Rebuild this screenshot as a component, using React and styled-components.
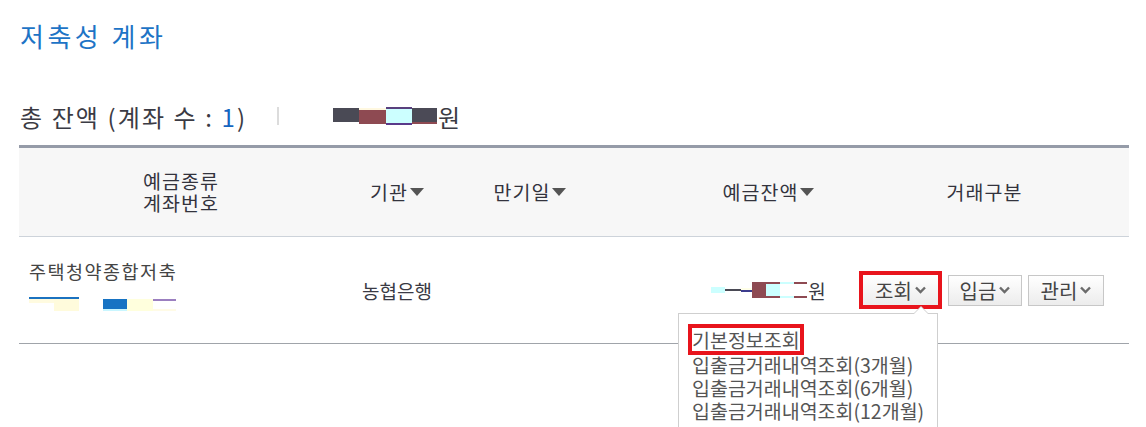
import React from "react";
import styled, { createGlobalStyle } from "styled-components";

const GlobalStyle = createGlobalStyle`
  body {
    margin: 0;
    background: #fff;
    font-family: "Noto Sans CJK KR", "Noto Sans", sans-serif;
    color: #333;
  }
`;

const Page = styled.div`
  width: 1146px;
  height: 427px;
  overflow: hidden;
  padding: 0 17px 0 19px;
  box-sizing: border-box;
`;

const Title = styled.h2`
  margin: 18px 0 0 1px;
  font-size: 26px;
  line-height: 36px;
  font-weight: 400;
  letter-spacing: 3.5px;
  color: #1d74c6;
`;

const Summary = styled.div`
  display: flex;
  align-items: center;
  margin-top: 44px;
  height: 36px;
  font-size: 24px;
  color: #3b3b44;
`;

const SummaryLabel = styled.span`
  letter-spacing: 2.1px;
  padding-left: 1px;
`;

const Count = styled.span`
  color: #1565c0;
`;

const Divider = styled.span`
  width: 2px;
  height: 18px;
  background: #dcdcdc;
  margin: 0 54px 0 30px;
`;

const Won = styled.span`
  margin-left: 1px;
`;

const Mask = styled.span`
  display: inline-flex;
  align-items: ${(p) => p.$align || "center"};
  height: ${(p) => p.$h}px;
`;

const Seg = styled.span`
  display: block;
  width: ${(p) => p.$w}px;
  height: ${(p) => p.$h}px;
  background: ${(p) => p.$bg || "transparent"};
  border-top: ${(p) => (p.$top ? `2px solid ${p.$top}` : "none")};
  border-bottom: ${(p) => (p.$bottom ? `2px solid ${p.$bottom}` : "none")};
  box-sizing: border-box;
  margin-top: ${(p) => p.$mt || 0}px;
`;

const Table = styled.div`
  margin-top: 11px;
  width: 1110px;
  border-top: 3px solid #959ba8;
`;

const Row = styled.div`
  display: grid;
  grid-template-columns: 324px 108px 158px 245px 1fr;
  align-items: center;
`;

const HeadRow = styled(Row)`
  height: 88px;
  background: #f7f7f7;
  border-bottom: 1px solid #cdd3da;
`;

const BodyRow = styled(Row)`
  height: 106px;
  border-bottom: 1px solid #a0a4aa;
`;

const Th = styled.div`
  text-align: center;
  font-size: 19.5px;
  line-height: 22px;
  letter-spacing: 1px;
  color: #33333d;
  padding-left: ${(p) => p.$pl || 0}px;
  padding-right: ${(p) => p.$pr || 0}px;
  display: flex;
  justify-content: center;
  align-items: center;
  flex-direction: column;
`;

const Sort = styled.span`
  display: inline-flex;
  align-items: center;
  gap: 2px;
`;

const Td = styled.div`
  display: flex;
  align-items: center;
  justify-content: ${(p) => p.$justify || "center"};
  padding-left: ${(p) => p.$pl || 0}px;
  font-size: 19px;
  color: #3a3a44;
  position: relative;
`;

const ProductCell = styled.div`
  display: flex;
  flex-direction: column;
  gap: 15px;
  padding-left: 10px;
  margin-top: -10px;
`;

const ProductName = styled.span`
  font-size: 18.5px;
  line-height: 22px;
  letter-spacing: 1.5px;
  color: #444;
`;

const AcctMask = styled.div`
  display: flex;
  gap: 24px;
`;

const Actions = styled.div`
  display: flex;
  align-items: center;
  gap: 6px;
  padding-left: 5px;
`;

const BtnWrap = styled.div`
  position: relative;
`;

const Button = styled.button`
  display: inline-flex;
  align-items: center;
  justify-content: center;
  gap: 3px;
  box-sizing: border-box;
  width: ${(p) => p.$w}px;
  height: ${(p) => (p.$hl ? 38 : 31)}px;
  border: ${(p) => (p.$hl ? "4px solid #e8141c" : "1px solid #c7c7c7")};
  background: linear-gradient(#ffffff, #ececec);
  font-family: "Noto Sans CJK KR", sans-serif;
  font-size: 20px;
  color: #444;
  padding: 0;
  cursor: pointer;
`;

const Menu = styled.div`
  position: absolute;
  left: -181px;
  top: 42px;
  width: 260px;
  height: 140px;
  box-sizing: border-box;
  background: #fff;
  border: 1px solid #cfcfcf;
  padding: 14px 0 0 13px;
  z-index: 2;
  &::before,
  &::after {
    content: "";
    position: absolute;
    left: 234px;
    border: 8px solid transparent;
    border-top: none;
  }
  &::before {
    top: -8px;
    border-bottom: 8px solid #cfcfcf;
  }
  &::after {
    top: -7px;
    border-bottom: 8px solid #fff;
  }
`;

const MenuItem = styled.div`
  font-size: 19.5px;
  line-height: 23px;
  color: #555;
  white-space: nowrap;
  margin-bottom: ${(p) => (p.$hl ? 2 : 0)}px;
  & > span {
    display: inline-block;
    outline: ${(p) => (p.$hl ? "4px solid #e8141c" : "none")};
  }
`;

const Tri = () => (
  <svg width="14" height="8" viewBox="0 0 14 8">
    <path d="M0 0h14L7 8z" fill="#555" />
  </svg>
);

const Chevron = () => (
  <svg width="11" height="8" viewBox="0 0 11 8">
    <path d="M1 1.5l4.5 4.5L10 1.5" fill="none" stroke="#6b6b6b" strokeWidth="2.4" />
  </svg>
);

const App = () => {
  return (
    <Page>
      <GlobalStyle />
      <Title>저축성 계좌</Title>
      <Summary>
        <SummaryLabel>
          총 잔액 (계좌 수 : <Count>1</Count>)
        </SummaryLabel>
        <Divider />
        <Mask $h={18}>
          <Seg $w={26} $h={16} $bg="#4a4a55" $bottom="#fff" />
          <Seg $w={27} $h={16} $bg="#8e4a52" $top="#fff8e0" />
          <Seg $w={26} $h={18} $bg="#ccffff" $top="#59407e" $bottom="#5a3a8a" />
          <Seg $w={25} $h={16} $bg="#4b4a56" $bottom="#8e4a52" />
        </Mask>
        <Won>원</Won>
      </Summary>

      <Table>
        <HeadRow>
          <Th>
            <span>예금종류</span>
            <span>계좌번호</span>
          </Th>
          <Th>
            <Sort>
              기관
              <Tri />
            </Sort>
          </Th>
          <Th>
            <Sort>
              만기일
              <Tri />
            </Sort>
          </Th>
          <Th $pl={74}>
            <Sort>
              예금잔액
              <Tri />
            </Sort>
          </Th>
          <Th $pr={14}>거래구분</Th>
        </HeadRow>

        <BodyRow>
          <Td $justify="flex-start">
            <ProductCell>
              <ProductName>주택청약종합저축</ProductName>
              <AcctMask>
                <Mask $h={14} $align="flex-start">
                  <Seg $w={25} $h={6} $bg="#fffbe0" $top="#1b72c0" />
                  <Seg $w={25} $h={14} $bg="#fffbdc" $top="#1b72c0" />
                </Mask>
                <Mask $h={14} $align="flex-start">
                  <Seg $w={24} $h={12} $bg="#1773c3" $bottom="#c9f6ff" $mt={2} />
                  <Seg $w={26} $h={12} $bg="#ffffdd" $mt={2} />
                  <Seg $w={23} $h={12} $top="#9b7fc0" $bottom="#fffbe6" $mt={2} />
                </Mask>
              </AcctMask>
            </ProductCell>
          </Td>
          <Td>농협은행</Td>
          <Td />
          <Td $pl={74}>
            <Mask $h={16}>
              <Seg $w={14} $h={6} $bg="#ccffff" />
              <Seg $w={16} $h={2} $bg="#4a4a55" />
              <Seg $w={11} $h={4} $bg="#ffffe8" $bottom="#3c3c8e" />
              <Seg $w={14} $h={16} $bg="#8e4a52" />
              <Seg $w={14} $h={16} $bg="#ccffff" $top="#8e4a52" $bottom="#8e4a52" />
              <Seg $w={14} $h={16} $bg="#ffffff" $top="#ccffff" $bottom="#ccffff" />
              <Seg $w={13} $h={16} $bg="#ffffff" $top="#8e4a52" $bottom="#8e4a52" />
            </Mask>
            <Won>원</Won>
          </Td>
          <Td $justify="flex-start">
            <Actions>
              <BtnWrap>
                <Button $w={83} $hl>
                  조회
                  <Chevron />
                </Button>
                <Menu>
                  <MenuItem $hl>
                    <span>기본정보조회</span>
                  </MenuItem>
                  <MenuItem>입출금거래내역조회(3개월)</MenuItem>
                  <MenuItem>입출금거래내역조회(6개월)</MenuItem>
                  <MenuItem>입출금거래내역조회(12개월)</MenuItem>
                </Menu>
              </BtnWrap>
              <Button $w={74}>
                입금
                <Chevron />
              </Button>
              <Button $w={76}>
                관리
                <Chevron />
              </Button>
            </Actions>
          </Td>
        </BodyRow>
      </Table>
    </Page>
  );
};

export default App;
